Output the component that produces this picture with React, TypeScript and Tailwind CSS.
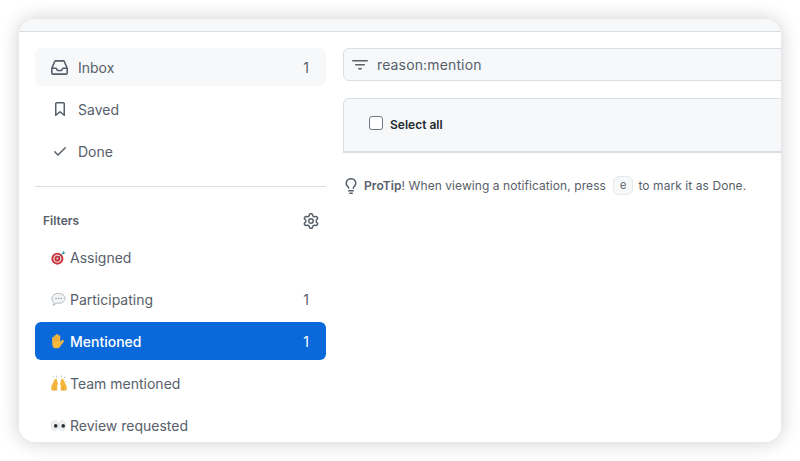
import React from 'react';

const icons = {
  inbox: "M2.8 2.06A1.75 1.75 0 0 1 4.41 1h7.18c.7 0 1.333.417 1.61 1.06l2.74 6.395c.04.093.06.194.06.295v4.5A1.75 1.75 0 0 1 14.25 15H1.75A1.75 1.75 0 0 1 0 13.25v-4.5c0-.101.02-.202.06-.295Zm1.61.44a.25.25 0 0 0-.23.152L1.887 8H4.75a.75.75 0 0 1 .6.3L6.625 10h2.75l1.275-1.7a.75.75 0 0 1 .6-.3h2.863L11.82 2.652a.25.25 0 0 0-.23-.152Zm10.09 7h-2.875l-1.275 1.7a.75.75 0 0 1-.6.3h-3.5a.75.75 0 0 1-.6-.3L4.375 9.5H1.5v3.75c0 .138.112.25.25.25h12.5a.25.25 0 0 0 .25-.25Z",
  bookmark: "M3 2.75C3 1.784 3.784 1 4.75 1h6.5c.966 0 1.75.784 1.75 1.75v11.5a.75.75 0 0 1-1.227.579L8 11.722l-3.773 3.107A.751.751 0 0 1 3 14.25Zm1.75-.25a.25.25 0 0 0-.25.25v9.91l3.023-2.489a.75.75 0 0 1 .954 0l3.023 2.49V2.75a.25.25 0 0 0-.25-.25Z",
  check: "M13.78 4.22a.75.75 0 0 1 0 1.06l-7.25 7.25a.75.75 0 0 1-1.06 0L2.22 9.28a.751.751 0 0 1 .018-1.042.751.751 0 0 1 1.042-.018L6 10.94l6.72-6.72a.75.75 0 0 1 1.06 0Z",
  filter: "M.75 3h14.5a.75.75 0 0 1 0 1.5H.75a.75.75 0 0 1 0-1.5ZM3 7.75A.75.75 0 0 1 3.75 7h8.5a.75.75 0 0 1 0 1.5h-8.5A.75.75 0 0 1 3 7.75Zm3 4a.75.75 0 0 1 .75-.75h2.5a.75.75 0 0 1 0 1.5h-2.5a.75.75 0 0 1-.75-.75Z",
  bulb: "M8 1.5c-2.363 0-4 1.69-4 3.75 0 .984.424 1.625.984 2.304l.214.253c.223.264.47.556.673.848.284.411.537.896.621 1.49a.75.75 0 0 1-1.484.211c-.04-.282-.163-.547-.37-.847a8.456 8.456 0 0 0-.542-.68c-.084-.1-.173-.205-.268-.32C3.201 7.75 2.5 6.766 2.5 5.25 2.5 2.31 4.863 0 8 0s5.5 2.31 5.5 5.25c0 1.516-.701 2.5-1.328 3.259-.095.115-.184.22-.268.319-.207.245-.383.453-.541.681-.208.3-.33.565-.37.847a.751.751 0 0 1-1.485-.212c.084-.593.337-1.078.621-1.489.203-.292.45-.584.673-.848.075-.088.147-.173.213-.253.561-.679.985-1.32.985-2.304 0-2.06-1.637-3.75-4-3.75ZM5.75 12h4.5a.75.75 0 0 1 0 1.5h-4.5a.75.75 0 0 1 0-1.5ZM6 15.25a.75.75 0 0 1 .75-.75h2.5a.75.75 0 0 1 0 1.5h-2.5a.75.75 0 0 1-.75-.75Z",
  gear: "M8 0a8.2 8.2 0 0 1 .701.031C9.444.095 9.99.645 10.16 1.29l.288 1.107c.018.066.079.158.212.224.231.114.454.243.668.386.123.082.233.09.299.071l1.103-.303c.644-.176 1.392.021 1.82.63.27.385.506.792.704 1.218.315.675.111 1.422-.364 1.891l-.814.806c-.049.048-.098.147-.088.294.016.257.016.515 0 .772-.01.147.038.246.088.294l.814.806c.475.469.679 1.216.364 1.891a7.977 7.977 0 0 1-.704 1.217c-.428.61-1.176.807-1.82.63l-1.102-.302c-.067-.019-.177-.011-.3.071a5.909 5.909 0 0 1-.668.386c-.133.066-.194.158-.211.224l-.29 1.106c-.168.646-.715 1.196-1.458 1.26a8.006 8.006 0 0 1-1.402 0c-.743-.064-1.289-.614-1.458-1.26l-.289-1.106c-.018-.066-.079-.158-.212-.224a5.738 5.738 0 0 1-.668-.386c-.123-.082-.233-.09-.299-.071l-1.103.303c-.644.176-1.392-.021-1.82-.63a8.12 8.12 0 0 1-.704-1.218c-.315-.675-.111-1.422.363-1.891l.815-.806c.05-.048.098-.147.088-.294a6.214 6.214 0 0 1 0-.772c.01-.147-.038-.246-.088-.294l-.815-.806C.635 6.045.431 5.298.746 4.623a7.92 7.92 0 0 1 .704-1.217c.428-.61 1.176-.807 1.82-.63l1.102.302c.067.019.177.011.3-.071.214-.143.437-.272.668-.386.133-.066.194-.158.211-.224l.29-1.106C6.009.645 6.556.095 7.299.03 7.53.01 7.764 0 8 0Zm-.571 1.525c-.036.003-.108.036-.137.146l-.289 1.105c-.147.561-.549.967-.998 1.189-.173.086-.34.183-.5.29-.417.278-.97.423-1.529.27l-1.103-.303c-.109-.03-.175.016-.195.045-.22.312-.412.644-.573.99-.014.031-.021.11.059.19l.815.806c.411.406.562.957.53 1.456a4.709 4.709 0 0 0 0 .582c.032.499-.119 1.05-.53 1.456l-.815.806c-.081.08-.073.159-.059.19.162.346.353.677.573.989.02.03.085.076.195.046l1.102-.303c.56-.153 1.113-.008 1.53.27.161.107.328.204.501.29.447.222.85.629.997 1.189l.289 1.105c.029.109.101.143.137.146a6.6 6.6 0 0 0 1.142 0c.036-.003.108-.036.137-.146l.289-1.105c.147-.561.549-.967.998-1.189.173-.086.34-.183.5-.29.417-.278.97-.423 1.529-.27l1.103.303c.109.029.175-.016.195-.045.22-.313.411-.644.573-.99.014-.031.021-.11-.059-.19l-.815-.806c-.411-.406-.562-.957-.53-1.456a4.709 4.709 0 0 0 0-.582c-.032-.499.119-1.05.53-1.456l.815-.806c.081-.08.073-.159.059-.19a6.464 6.464 0 0 0-.573-.989c-.02-.03-.085-.076-.195-.046l-1.102.303c-.56.153-1.113.008-1.53-.27a4.44 4.44 0 0 0-.501-.29c-.447-.222-.85-.629-.997-1.189l-.289-1.105c-.029-.11-.101-.143-.137-.146a6.6 6.6 0 0 0-1.142 0ZM11 8a3 3 0 1 1-6 0 3 3 0 0 1 6 0ZM9.5 8a1.5 1.5 0 1 0-3.001.001A1.5 1.5 0 0 0 9.5 8Z",
};

function Octicon({ d, size = 16, className = '' }: { d: string; size?: number; className?: string }) {
  return (
    <svg viewBox="0 0 16 16" width={size} height={size} fill="currentColor" className={`shrink-0 ${className}`}>
      <path d={d} />
    </svg>
  );
}

function Target() {
  return (
    <svg viewBox="0 0 16 16" width="15" height="15" className="shrink-0">
      <circle cx="6.8" cy="9.2" r="6.4" fill="#c9343f" />
      <circle cx="6.8" cy="9.2" r="4.4" fill="#f0d3d0" />
      <circle cx="6.8" cy="9.2" r="3" fill="#c9343f" />
      <circle cx="6.8" cy="9.2" r="1.1" fill="#f0d3d0" />
      <path d="M7 9 13 3" stroke="#5f6b73" strokeWidth="1" />
      <path d="M11.8 3.8 13 .8l1 1.6 1.8.7-3 1.5Z" fill="#38a3b3" />
    </svg>
  );
}

function Bubble() {
  return (
    <svg viewBox="0 0 16 16" width="15" height="15" className="shrink-0">
      <path d="M8 1.5c3.9 0 7 2.3 7 5.3s-3.1 5.3-7 5.3c-.8 0-1.5-.1-2.2-.3-.8.9-2 1.9-3.6 2.4.7-.9 1.1-2 1.2-3C1.9 10.4 1 8.7 1 6.8c0-3 3.1-5.3 7-5.3Z" fill="#f1f3f5" stroke="#aeb6bd" strokeWidth="1" />
      <circle cx="5.3" cy="6.8" r=".7" fill="#7d868e" />
      <circle cx="8" cy="6.8" r=".7" fill="#7d868e" />
      <circle cx="10.7" cy="6.8" r=".7" fill="#7d868e" />
    </svg>
  );
}

function Hand() {
  return (
    <svg viewBox="0 0 16 16" width="15" height="15" className="shrink-0">
      <path d="M3.4 15.4C1.6 13.8 1.3 11.4 1.3 9V4.4c0-1.5 2-1.5 2 0V2.5c0-1.5 2.1-1.5 2.1 0V1.2c0-1.6 2.3-1.6 2.3 0v1.3c0-1.5 2.1-1.5 2.1 0v6l1.9-1.8c1.2-1.1 2.8.3 1.8 1.5l-2.9 3.8c-1 1.8-2 3.3-3.9 3.3-1.1 0-3-.1-3.9-.9Z" fill="#f7b93e" />
      <path d="M3.3 4.4v4.2M5.4 2.5v5.8M7.7 2.5v5.8" stroke="#c98a1f" strokeWidth=".5" />
    </svg>
  );
}

function Hands() {
  return (
    <svg viewBox="0 0 16 16" width="16" height="16" className="shrink-0">
      <path d="M.3 15.6v-4.4L2.4 7c.2-1.3 1.1-2.5 1.9-3 .8-.4 1.5.2 1.6 1l1 3.6c.2.7-.1 1.3-.6 1.6v5.4Z" fill="#f4b63c" />
      <path d="M15.7 15.6v-4.4L13.6 7c-.2-1.3-1.1-2.5-1.9-3-.8-.4-1.5.2-1.6 1l-1 3.6c-.2.7.1 1.3.6 1.6v5.4Z" fill="#f4b63c" />
      <path d="M3.8 15.6v-4M12.2 15.6v-4" stroke="#d2952a" strokeWidth=".6" />
      <path d="M2.6 3 2 1.4M5.6 2.4 5.4.6M10.4 2.4l.2-1.8M13.4 3l.6-1.6" stroke="#a9b0b6" strokeWidth=".7" />
    </svg>
  );
}

function Eyes() {
  return (
    <svg viewBox="0 0 16 16" width="15" height="15" className="shrink-0">
      <ellipse cx="4" cy="8" rx="3.8" ry="5.2" fill="#eef0f1" stroke="#c9ced2" strokeWidth=".5" />
      <ellipse cx="12" cy="8" rx="3.8" ry="5.2" fill="#eef0f1" stroke="#c9ced2" strokeWidth=".5" />
      <circle cx="5" cy="8.4" r="1.9" fill="#2c2f33" />
      <circle cx="13" cy="8.4" r="1.9" fill="#2c2f33" />
    </svg>
  );
}

function NavRow({ icon, label, count, active, selected }: { icon: React.ReactNode; label: string; count?: string; active?: boolean; selected?: boolean }) {
  const tone = active ? 'bg-[#0969da] text-white' : selected ? 'bg-[#f6f8fa] text-[#57606a]' : 'text-[#57606a]';
  return (
    <div className={`flex h-[38px] items-center rounded-[6px] pl-4 pr-[17px] ${tone}`}>
      {icon}
      <span className={`flex-1 truncate text-[14px] ${active ? 'font-medium' : ''}`}>{label}</span>
      {count && <span className="text-[14px]">{count}</span>}
    </div>
  );
}

export default function App() {
  return (
    <div className="h-[461px] w-[800px] overflow-hidden bg-white p-[19px] font-['Inter',sans-serif]">
      <div className="flex h-[423px] flex-col overflow-hidden rounded-[16px] bg-white shadow-[0_0_20px_rgba(0,0,0,0.2)]">
        <div className="h-[13px] shrink-0 border-b border-[#d8dee4] bg-[#f6f8fa]" />

        <div className="flex min-h-0 flex-1 pl-4 pt-[16px]">
          <aside className="w-[291px] shrink-0">
            <div className="flex flex-col gap-1">
              <NavRow selected label="Inbox" count="1" icon={<span className="mr-[10px] flex w-[17px] justify-center"><Octicon d={icons.inbox} size={17} /></span>} />
              <NavRow label="Saved" icon={<span className="mr-[10px] flex w-[17px] justify-center"><Octicon d={icons.bookmark} /></span>} />
              <NavRow label="Done" icon={<span className="mr-[10px] flex w-[17px] justify-center"><Octicon d={icons.check} /></span>} />
            </div>

            <div className="mt-[16px] border-t border-[#d8dee4]" />

            <div className="mt-[23px] flex h-[22px] items-center justify-between pl-2 pr-[7px] text-[#57606a]">
              <span className="text-[12px] font-semibold">Filters</span>
              <Octicon d={icons.gear} />
            </div>

            <div className="mt-[6px] flex flex-col gap-1">
              <NavRow label="Assigned" icon={<span className="mr-[4px]"><Target /></span>} />
              <NavRow label="Participating" count="1" icon={<span className="mr-[4px]"><Bubble /></span>} />
              <NavRow active label="Mentioned" count="1" icon={<span className="mr-[4px]"><Hand /></span>} />
              <NavRow label="Team mentioned" icon={<span className="mr-[3px]"><Hands /></span>} />
              <NavRow label="Review requested" icon={<span className="mr-[4px]"><Eyes /></span>} />
            </div>
          </aside>

          <main className="ml-[17px] min-w-0 flex-1">
            <div className="-mr-4 flex h-[33px] items-center rounded-l-[6px] border border-[#d8dee4] bg-[#f6f8fa] pl-2 text-[#57606a]">
              <Octicon d={icons.filter} />
              <span className="ml-[9px] text-[14px] tracking-[0.01em]">reason:mention</span>
            </div>

            <div className="-mr-4 mt-[17px] flex h-[55px] items-center rounded-t-[6px] border border-b-2 border-[#d8dee4] bg-[#f6f8fa] pl-[25px] pb-[5px]">
              <span className="h-[14px] w-[14px] rounded-[3px] border border-[#6e7781] bg-white" />
              <span className="ml-[7px] mt-[5px] text-[12px] font-semibold text-[#24292f]">Select all</span>
            </div>

            <div className="mt-[23px] flex items-center text-[12px] tracking-[0.006em] text-[#57606a]">
              <Octicon d={icons.bulb} className="mr-[4px]" />
              <span className="ml-[1px]"><b className="font-semibold">ProTip</b>! When viewing a notification, press</span>
              <span className="ml-[7px] mr-[5px] rounded-[6px] border border-[#e6e9ec] bg-[#f6f8fa] px-[6px] text-[11px] leading-[17px]">e</span>
              <span>to mark it as Done.</span>
            </div>
          </main>
        </div>
      </div>
    </div>
  );
}
